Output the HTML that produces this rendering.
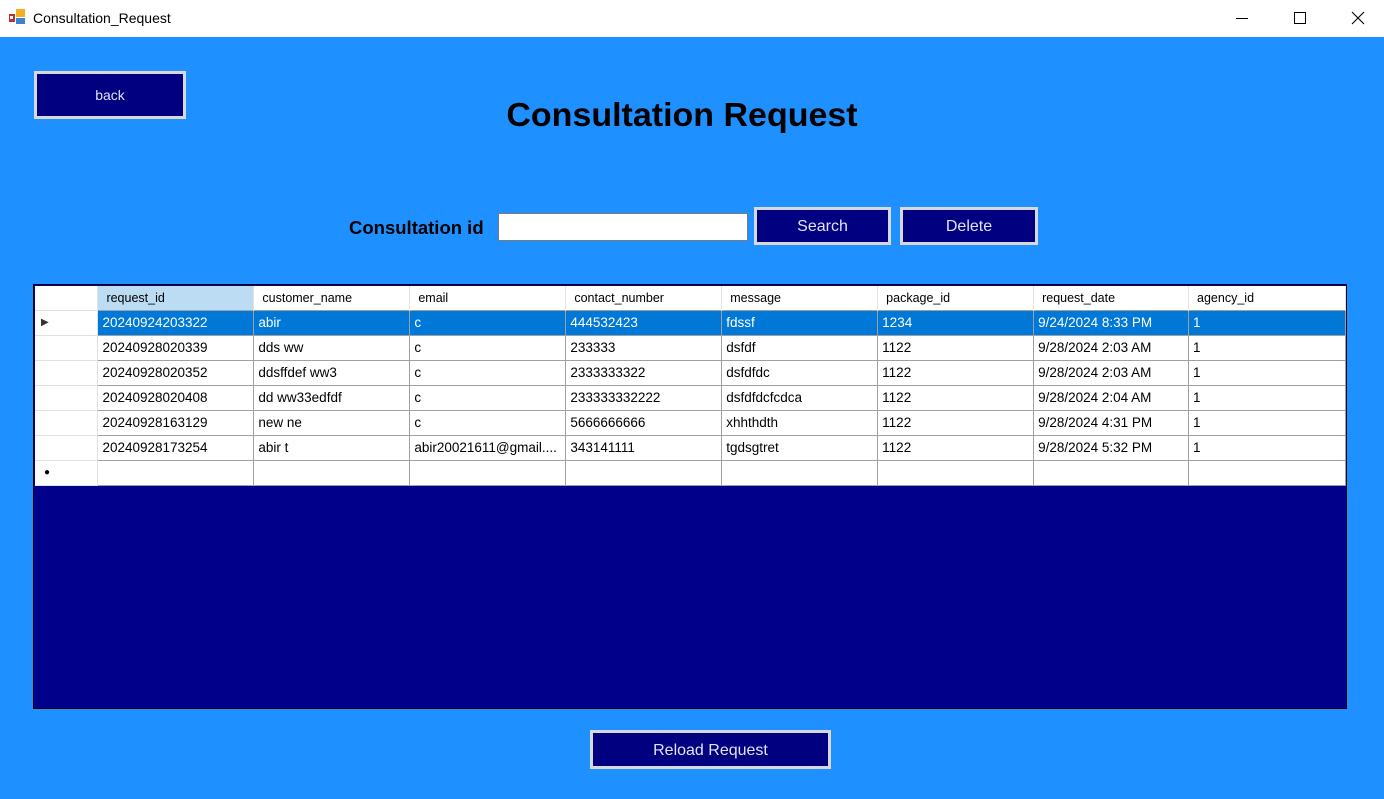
<!DOCTYPE html>
<html><head><meta charset="utf-8"><style>
*{margin:0;padding:0;box-sizing:border-box}
body{width:1384px;height:799px;overflow:hidden;background:#1E90FF;font-family:"Liberation Sans",sans-serif;position:relative}
.tb{position:absolute;left:0;top:0;width:1384px;height:37px;background:#fff}
.tb .t{position:absolute;left:33px;top:10px;font-size:14px;color:#000}
.btn{position:absolute;background:#000080;border:3px solid #d8d8d8;color:#dfe4f4;text-align:center;font-size:16px}
.grid{position:absolute;left:33px;top:284px;width:1314px;height:425px;background:#00008B;border:1px solid #000}
table{border-collapse:collapse;table-layout:fixed;position:absolute;left:1px;top:1px}
td{height:25px;border:1px solid #a0a0a0;background:#fff;font-size:13.5px;padding:0 0 0 4px;white-space:nowrap;overflow:hidden;color:#000}
tr.h td{height:24px;font-size:12.5px;padding-left:8px;border:none;border-right:1px solid #e3e3e3}
tr.sel td{background:#0078D7;color:#fff}
td.rh{background:#fff;border-left:none;border-color:#e0e0e0}
tr.sel td.rh{background:#fff;color:#333}
</style></head><body>
<div class="tb">
<svg style="position:absolute;left:9px;top:9px" width="17" height="17"><rect x="0" y="5" width="6" height="8" fill="#c0302a"/><rect x="7" y="0" width="9" height="8" fill="#f0b020"/><rect x="7" y="9" width="9" height="6" fill="#4080d0"/><rect x="1" y="7" width="3" height="3" fill="#fff"/></svg>
<div class="t">Consultation_Request</div>
<div style="position:absolute;left:1236px;top:18px;width:12px;height:1px;background:#000"></div>
<div style="position:absolute;left:1294px;top:12px;width:12px;height:12px;border:1px solid #000"></div>
<svg style="position:absolute;left:1351px;top:11px" width="14" height="14"><path d="M1 1L13 13M13 1L1 13" stroke="#000" stroke-width="1.1"/></svg>
</div>
<div class="btn" style="left:34px;top:71px;width:152px;height:48px;line-height:42px;font-size:14px">back</div>
<div style="position:absolute;left:0;width:1364px;top:96px;text-align:center;font-size:33px;font-weight:bold;color:#000;transform:scaleX(1.03)">Consultation Request</div>
<div style="position:absolute;left:349px;top:217px;font-size:18.5px;font-weight:bold;color:#000;transform-origin:left;transform:scaleX(1.0)">Consultation id</div>
<div style="position:absolute;left:498px;top:213px;width:250px;height:28px;background:#fff;border:1px solid #7a7a7a"></div>
<div class="btn" style="left:754px;top:207px;width:137px;height:38px;line-height:34px">Search</div>
<div class="btn" style="left:900px;top:207px;width:138px;height:38px;line-height:34px">Delete</div>
<div class="grid">
<table>
<colgroup><col style="width:63px"><col style="width:156px"><col style="width:156px"><col style="width:156px"><col style="width:156px"><col style="width:156px"><col style="width:156px"><col style="width:155px"><col style="width:157px"></colgroup>
<tr class="h"><td class="rh"></td><td style="background:#BCDCF4">request_id</td><td>customer_name</td><td>email</td><td>contact_number</td><td>message</td><td>package_id</td><td>request_date</td><td>agency_id</td></tr>
<tr class="sel"><td class="rh" style="font-size:10px;padding-left:6px">&#9654;</td><td>20240924203322</td><td>abir</td><td>c</td><td>444532423</td><td>fdssf</td><td>1234</td><td>9/24/2024 8:33 PM</td><td>1</td></tr>
<tr><td class="rh"></td><td>20240928020339</td><td>dds ww</td><td>c</td><td>233333</td><td>dsfdf</td><td>1122</td><td>9/28/2024 2:03 AM</td><td>1</td></tr>
<tr><td class="rh"></td><td>20240928020352</td><td>ddsffdef ww3</td><td>c</td><td>2333333322</td><td>dsfdfdc</td><td>1122</td><td>9/28/2024 2:03 AM</td><td>1</td></tr>
<tr><td class="rh"></td><td>20240928020408</td><td>dd ww33edfdf</td><td>c</td><td>233333332222</td><td>dsfdfdcfcdca</td><td>1122</td><td>9/28/2024 2:04 AM</td><td>1</td></tr>
<tr><td class="rh"></td><td>20240928163129</td><td>new ne</td><td>c</td><td>5666666666</td><td>xhhthdth</td><td>1122</td><td>9/28/2024 4:31 PM</td><td>1</td></tr>
<tr><td class="rh"></td><td>20240928173254</td><td>abir t</td><td>abir20021611@gmail....</td><td>343141111</td><td>tgdsgtret</td><td>1122</td><td>9/28/2024 5:32 PM</td><td>1</td></tr>
<tr><td class="rh" style="font-size:10px;padding-left:9px">&#9679;</td><td></td><td></td><td></td><td></td><td></td><td></td><td></td><td></td></tr>
</table>
</div>
<div class="btn" style="left:590px;top:730px;width:241px;height:39px;line-height:35px">Reload Request</div>
</body></html>
